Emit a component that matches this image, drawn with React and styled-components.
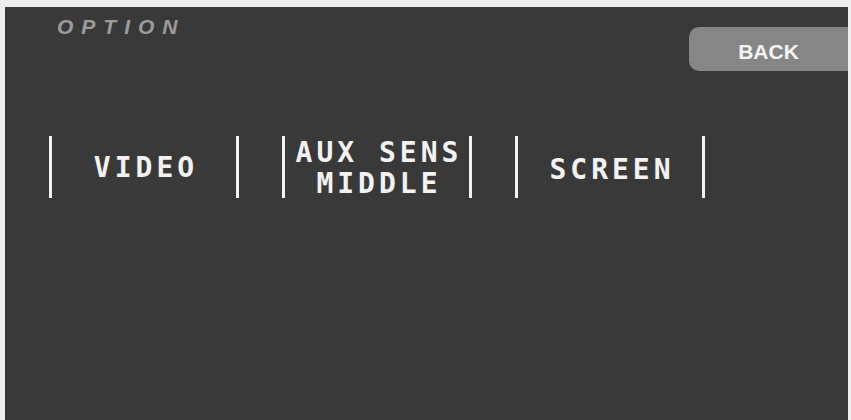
import React from 'react';
import styled, { createGlobalStyle } from 'styled-components';

const GlobalStyle = createGlobalStyle`
  html, body {
    margin: 0;
    padding: 0;
    background-color: #eeeeee;
  }
  body {
    font-family: 'Liberation Sans', Arial, sans-serif;
  }
`;

const options = [
  { id: 'video', label: ['VIDEO'] },
  { id: 'aux', label: ['AUX SENS', 'MIDDLE'], drop: 2 },
  { id: 'screen', label: ['SCREEN'], drop: 4 },
];

const App = () => {
  return (
    <>
      <GlobalStyle />
      <Frame>
        <Screen>
          <Header>
            <Title>OPTION</Title>
            <BackButton>BACK</BackButton>
          </Header>

          {/* 옵션 버튼 줄 */}
          <OptionRow>
            {options.map((opt) => (
              <OptionButton key={opt.id}>
                <OptionLabel $drop={opt.drop}>
                  {opt.label.map((line) => (
                    <LabelLine key={line}>{line}</LabelLine>
                  ))}
                </OptionLabel>
              </OptionButton>
            ))}
          </OptionRow>
        </Screen>
      </Frame>
    </>
  );
};

export default App;

// Styled components

const Frame = styled.div`
  width: 851px;
  height: 420px;
  padding: 7px 3px 0 5px;
  box-sizing: border-box;
  background-color: #eeeeee;
  overflow: hidden;
`;

const Screen = styled.div`
  width: 100%;
  height: 100%;
  background-color: #393939;
  display: flex;
  flex-direction: column;
`;

const Header = styled.div`
  display: flex;
  justify-content: space-between;
  align-items: flex-start;
`;

const Title = styled.p`
  margin: 9px 0 0 52px;
  font-size: 21px;
  line-height: 21px;
  font-style: italic;
  font-weight: bold;
  letter-spacing: 8px;
  color: #9c9c9c;
`;

const BackButton = styled.button`
  margin-top: 20px;
  width: 159px;
  height: 44px;
  border: none;
  border-radius: 10px 0 0 10px;
  background-color: #868686;
  color: #f4f4f4;
  font-family: 'Liberation Sans', Arial, sans-serif;
  font-size: 21px;
  font-weight: bold;
  padding: 6px 0 0;
  cursor: pointer;
`;

const OptionRow = styled.div`
  display: flex;
  gap: 43px;
  margin-top: 65px;
  padding-left: 44px;
`;

const OptionButton = styled.div`
  width: 190px;
  height: 62px;
  box-sizing: border-box;
  border-left: 3px solid #f2f2f2;
  border-right: 3px solid #f2f2f2;
  display: flex;
  align-items: center;
  justify-content: center;
`;

const OptionLabel = styled.div`
  display: flex;
  flex-direction: column;
  align-items: center;
  padding-top: ${(p) => p.$drop || 0}px;
  padding-left: 4px;
  font-family: 'DejaVu Sans Mono', 'Liberation Mono', monospace;
  font-size: 28px;
  font-weight: bold;
  letter-spacing: 4px;
  color: #f2f2f2;
  white-space: pre;
`;

const LabelLine = styled.span`
  display: block;
  height: 31px;
  line-height: 31px;
`;
